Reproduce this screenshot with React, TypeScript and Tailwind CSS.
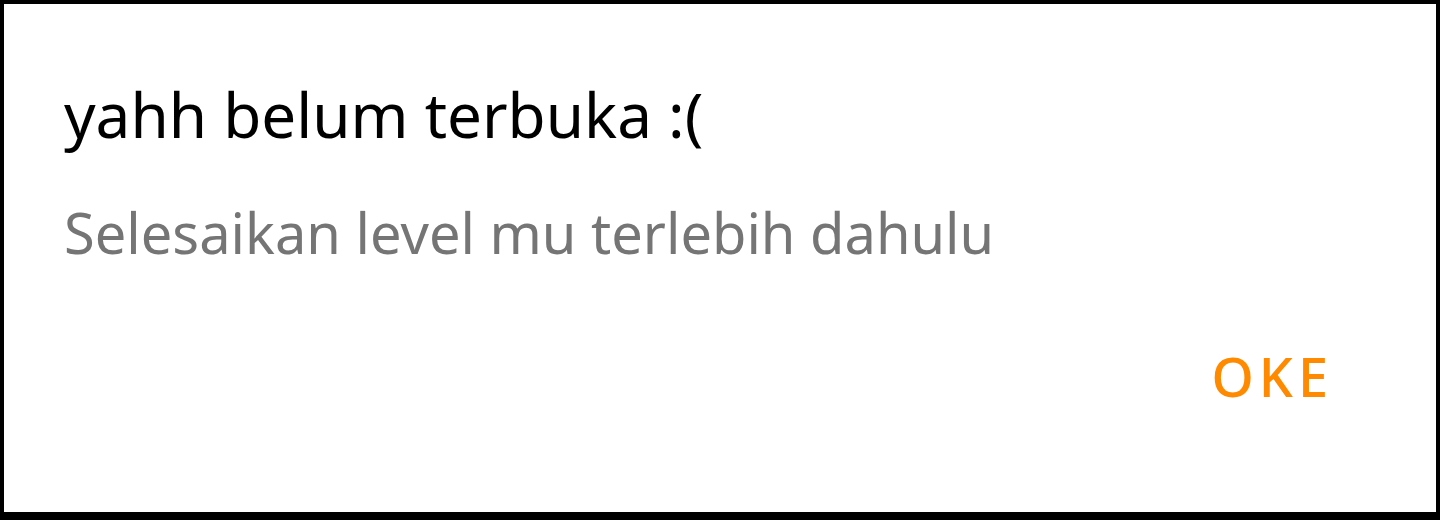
export default function App() {
  return (
    <div
      className="w-[1440px] h-[520px] bg-black pt-[4px] pl-[4px] pr-[4px] pb-[8px]"
      style={{ fontFamily: '"Noto Sans", "Open Sans", sans-serif' }}
    >
      <div className="h-full bg-white flex flex-col pl-[60px] pr-[103px]">
        <h1 className="mt-[70px] text-[62px] leading-[80px] text-black font-normal">
          yahh belum terbuka :(
        </h1>
        <p className="mt-[43px] text-[56px] leading-[70px] text-[#757575]">
          Selesaikan level mu terlebih dahulu
        </p>
        <div className="mt-auto mb-[106px] flex justify-end">
          <button className="text-[54px] leading-[60px] font-medium tracking-[5px] text-[#ff8a00]">
            OKE
          </button>
        </div>
      </div>
    </div>
  );
}
